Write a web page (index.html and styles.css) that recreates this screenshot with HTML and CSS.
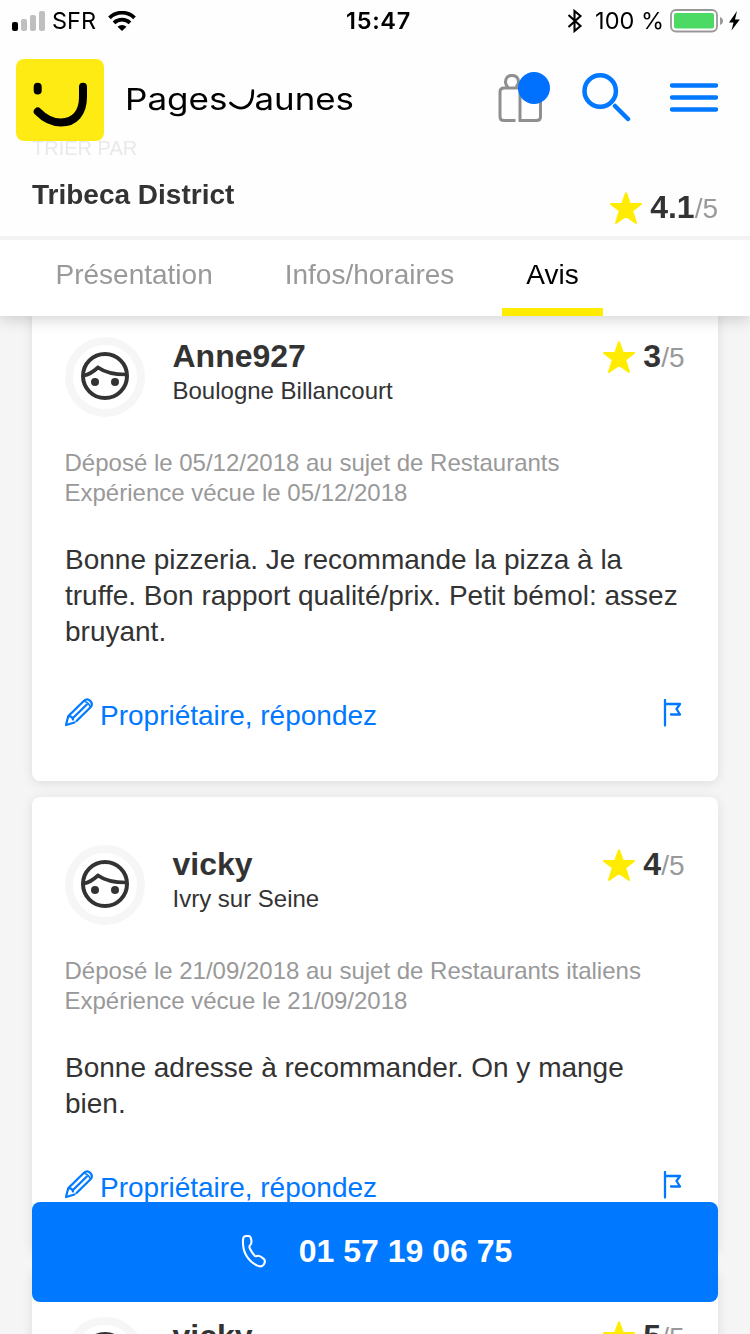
FILE: index.html
```html
<!DOCTYPE html>
<html lang="fr">
<head>
<meta charset="utf-8">
<title>Tribeca District - Avis</title>
<link rel="stylesheet" href="styles.css">
</head>
<body>
<svg class="sprite" aria-hidden="true">
  <symbol id="star" viewBox="0 0 32 32"><path d="M16 1.200 19.900 12H31L22.200 18.800 26 31 16 24 6 31 9.800 18.800 1 12H12.100Z" fill="#ffec00" stroke="#ffec00" stroke-width="2" stroke-linejoin="round"/></symbol>
  <symbol id="face" viewBox="0 0 48 48"><circle cx="24" cy="24" r="22" fill="none" stroke="#333" stroke-width="4"/><path d="M3 23.500C8 22.800 12.500 19.500 17 15.500C24 20.500 32 22.500 45 22.500" fill="none" stroke="#333" stroke-width="3.700"/><circle cx="14" cy="30" r="4" fill="#333"/><circle cx="34" cy="30" r="4" fill="#333"/></symbol>
  <symbol id="pen" viewBox="0 0 28 28"><path d="M9.500 24.500 1 27 3.200 18.300 19 2.800C21 .9 23.300 1 25.200 2.900S27.300 7.200 25.500 9.200L11.500 23M3.200 18.300C5.500 18 7.500 19.500 8 21.500M8 20 21.800 6.500" fill="none" stroke="#0078ff" stroke-width="2.200" stroke-linejoin="round" stroke-linecap="round"/><path d="M19.500 3.500Q24 4.500 24.800 8.500" fill="none" stroke="#0078ff" stroke-width="1.500"/></symbol>
  <symbol id="flag" viewBox="0 0 20 28"><path d="M2 1V26.500M2 5H17L13.500 10 17 15.500H8" fill="none" stroke="#0078ff" stroke-width="2.300" stroke-linecap="round" stroke-linejoin="round"/></symbol>
</svg>

<header class="top">
  <div class="status">
    <div class="status-left">
      <svg width="33" height="20" viewBox="0 0 33 20"><rect y="11" width="6" height="9" rx="2"/><g fill="#bfbfbf"><rect x="9" y="8" width="6" height="12" rx="2"/><rect x="18" y="4" width="6" height="16" rx="2"/><rect x="27" width="6" height="20" rx="2"/></g></svg>
      <span class="carrier">SFR</span>
      <svg width="28" height="20" viewBox="0 0 28 20"><path d="M1.500 6.800A17.800 17.800 0 0 1 26.500 6.800M6 11.800A11.500 11.500 0 0 1 22 11.800" fill="none" stroke="#000" stroke-width="3.800"/><path d="M9.500 15.800A6.500 6.500 0 0 1 18.500 15.800L14 20Z"/></svg>
    </div>
    <span class="clock">15:47</span>
    <div class="status-right">
      <svg width="16" height="24" viewBox="0 0 16 24"><path d="M1.500 6 13.500 17 7.500 22V2L13.500 7 1.500 18" fill="none" stroke="#000" stroke-width="2.100"/></svg>
      <span class="percent">100 %</span>
      <svg width="70" height="24" viewBox="0 0 70 24"><rect x="1" y="1" width="46" height="21.500" rx="5" fill="none" stroke="#999" stroke-width="1.800"/><rect x="4" y="4" width="40" height="15.500" rx="2" fill="#4cd964"/><path d="M50 8Q53 9.200 53 12T50 16Z" fill="#999"/><path d="M67 2 59 13.500H63.500L61.500 21.500 69.800 10.500H65Z"/></svg>
    </div>
  </div>

  <div class="brand-row">
    <span class="sort-label">TRIER PAR</span>
    <svg class="logo" width="88" height="82" viewBox="0 0 88 82"><rect width="88" height="82" rx="8" fill="#ffeb14"/><path d="M21.700 27.800V31.500M67 27.800V38C67 54 58.500 63.500 45 63.500C35 63.500 28 59 21.700 52.500" fill="none" stroke="#000" stroke-width="8" stroke-linecap="round"/></svg>
    <svg class="wordmark" width="230" height="40" viewBox="0 0 230 40"><text x="0" y="31.500" textLength="102.500" lengthAdjust="spacingAndGlyphs">Pages</text><path d="M105.500 25C112 32.500 127.800 34 127.800 12.500" fill="none" stroke="#000" stroke-width="2.700" stroke-linecap="round"/><text x="129.500" y="31.500" textLength="99.500" lengthAdjust="spacingAndGlyphs">aunes</text></svg>
    <div class="tools">
      <svg width="54" height="52" viewBox="0 0 54 52"><g fill="none" stroke="#8f8f8f" stroke-width="3"><path d="M17.500 49.500H6Q2 49.500 2 45.500V21Q2 17 6 17H38.500Q42.500 17 42.500 21V45.500Q42.500 49.500 38.500 49.500H22V16"/><path d="M10 16.500C5.500 11.500 7.500 4.500 14 4.500S22.500 11.500 18 16"/></g><circle cx="36" cy="17" r="16" fill="#0070ff"/></svg>
      <svg width="50" height="50" viewBox="0 0 50 50"><circle cx="18.200" cy="19" r="15.700" fill="none" stroke="#0078ff" stroke-width="4.500"/><path d="M33 34 46 47" stroke="#0078ff" stroke-width="4.500" stroke-linecap="round"/></svg>
      <svg width="48" height="30" viewBox="0 0 48 30"><path d="M2 3.500H46M2 15.500H46M2 27.500H46" stroke="#0078ff" stroke-width="4.300" stroke-linecap="round"/></svg>
    </div>
  </div>

  <div class="place">
    <h1 class="place-name">Tribeca District</h1>
    <div class="rating place-rating"><svg class="star"><use href="#star"/></svg><b>4.1</b><span>/5</span></div>
  </div>
  <nav class="tabs">
    <a class="tab">Présentation</a>
    <a class="tab">Infos/horaires</a>
    <a class="tab active">Avis</a>
  </nav>
</header>

<main class="reviews">
  <article class="card">
    <div class="card-head">
      <div class="avatar"><svg><use href="#face"/></svg></div>
      <div class="author"><h2>Anne927</h2><p>Boulogne Billancourt</p></div>
      <div class="rating"><svg class="star"><use href="#star"/></svg><b>3</b><span>/5</span></div>
    </div>
    <p class="meta">Déposé le 05/12/2018 au sujet de Restaurants<br>Expérience vécue le 05/12/2018</p>
    <p class="comment">Bonne pizzeria. Je recommande la pizza à la<br>truffe. Bon rapport qualité/prix. Petit bémol: assez<br>bruyant.</p>
    <div class="actions"><svg class="pen"><use href="#pen"/></svg><a>Propriétaire, répondez</a><svg class="flag"><use href="#flag"/></svg></div>
  </article>

  <article class="card">
    <div class="card-head">
      <div class="avatar"><svg><use href="#face"/></svg></div>
      <div class="author"><h2>vicky</h2><p>Ivry sur Seine</p></div>
      <div class="rating"><svg class="star"><use href="#star"/></svg><b>4</b><span>/5</span></div>
    </div>
    <p class="meta">Déposé le 21/09/2018 au sujet de Restaurants italiens<br>Expérience vécue le 21/09/2018</p>
    <p class="comment">Bonne adresse à recommander. On y mange<br>bien.</p>
    <div class="actions"><svg class="pen"><use href="#pen"/></svg><a>Propriétaire, répondez</a><svg class="flag"><use href="#flag"/></svg></div>
  </article>

  <article class="card">
    <div class="card-head">
      <div class="avatar"><svg><use href="#face"/></svg></div>
      <div class="author"><h2>vicky</h2></div>
      <div class="rating"><svg class="star"><use href="#star"/></svg><b>5</b><span>/5</span></div>
    </div>
  </article>
</main>

<a class="call">
  <svg width="26" height="34" viewBox="0 0 26 34"><path d="M16 31.500C6 26 1.500 17.500 2 6.500C2 2.500 3.500 2 5.500 2H7.500C9.500 2 10 3.500 10.300 6C10.700 8.500 10.900 10 8.900 11.500C8 12.300 8.500 14 9.500 15.800C10.600 17.800 12.500 20.500 13.700 21.800C14.800 22.800 15.500 22 17 21.800C18.800 21.600 21 23.500 22.500 24.700C24.600 26.300 24 28.500 22.800 30.500C21.500 32.600 20 32.900 17.500 32" fill="none" stroke="#fff" stroke-width="2.100" stroke-linecap="round" stroke-linejoin="round"/></svg>
  <span>01 57 19 06 75</span>
</a>
</body>
</html>
```
FILE: styles.css
```css
* { box-sizing: border-box; }
body {
  margin: 0;
  height: 1334px;
  overflow: hidden;
  background: #f5f5f5;
  color: #333;
  font-family: "Liberation Sans", Arial, sans-serif;
}
h1, h2, p { margin: 0; }
svg { display: block; flex: none; }
.sprite { position: absolute; width: 0; height: 0; }

.top {
  position: fixed;
  top: 0;
  left: 0;
  z-index: 2;
  width: 750px;
  height: 316px;
  display: flex;
  flex-direction: column;
  background: #fefefe;
  box-shadow: 0 2px 16px rgba(0, 0, 0, .2);
}

.status {
  height: 41px;
  display: grid;
  grid-template-columns: 1fr auto 1fr;
  align-items: center;
  padding: 0 10px 0 12px;
  color: #000;
  font: 23.500px/40px Inter, sans-serif;
}
.status-left, .status-right { display: flex; align-items: center; }
.status-right { justify-content: flex-end; }
.status-left { padding-bottom: 1px; }
.carrier { margin: 0 12px 0 7px; padding-top: 1px; }
.clock { font-weight: 600; letter-spacing: .7px; margin-left: 5px; }
.percent { margin: 0 6px 0 12px; }

.brand-row {
  position: relative;
  height: 118px;
  display: flex;
  align-items: flex-start;
  padding: 18px 32px 0 16px;
}
.logo { position: relative; }
.wordmark { margin: 19px 0 0 21px; overflow: visible; font: 30px Inter, sans-serif; }
.tools { display: flex; align-items: center; margin: 12px 0 0 auto; }
.tools svg:nth-child(1) { margin-right: 30px; }
.tools svg:nth-child(2) { margin-right: 38px; }
.sort-label {
  position: absolute;
  left: 32px;
  top: 95px;
  font-size: 20px;
  line-height: 24px;
  color: #e9e9e9;
}

.place {
  height: 81px;
  display: flex;
  justify-content: space-between;
  padding: 20px 32px 0;
  border-bottom: 4px solid #f3f3f3;
}
.place-name { font-size: 28px; line-height: 32px; }
.place-rating { margin-top: 9px; }

.rating { display: flex; align-items: baseline; line-height: 36px; height: 36px; padding-top: 1px; }
.rating b { font-size: 32px; margin-left: 8px; }
.rating span { font-size: 28px; color: #999; }
.star { width: 32px; height: 32px; align-self: center; margin-top: 2px; }
.card .rating { margin-right: .5px; }

.tabs { flex: 1; display: flex; gap: 24px; padding-left: 31.500px; background: #fff; }
.tab { padding: 18px 24px 0; font-size: 28px; line-height: 34px; color: #999; }
.tab.active { color: #000; border-bottom: 8px solid #ffec00; }

.reviews { padding: 289px 32px 0; display: flex; flex-direction: column; gap: 16px; }
.card {
  padding: 48px 33px 47px;
  border-radius: 8px;
  background: #fff;
  box-shadow: 0 2px 12px rgba(0, 0, 0, .1);
}
.card-head { display: flex; }
.avatar {
  width: 80px;
  height: 80px;
  border: 8px solid #f6f6f6;
  border-radius: 50%;
  display: flex;
  align-items: center;
  justify-content: center;
}
.avatar svg { width: 48px; height: 48px; margin-top: -2px; }
.author { flex: 1; margin-left: 27.500px; }
.author h2 { font-size: 32px; line-height: 38px; }
.author p { font-size: 24px; line-height: 32px; }
.meta { margin: 31px 0 0 -.5px; font-size: 24px; line-height: 30px; color: #999; }
.comment { margin-top: 34px; font-size: 28px; line-height: 36px; }
.actions { display: flex; margin-top: 48px; font-size: 28px; line-height: 36px; color: #0078ff; }
.pen { width: 28px; height: 28px; margin-right: 7px; }
.flag { width: 20px; height: 28px; margin: 1px 2px 0 auto; }

.call {
  position: fixed;
  left: 32px;
  top: 1202px;
  z-index: 1;
  width: 686px;
  height: 100px;
  display: flex;
  align-items: center;
  justify-content: center;
  gap: 32px;
  padding: 0 0 2px 3px;
  border-radius: 8px;
  background: #0078ff;
  color: #fff;
  font-size: 32px;
  font-weight: 700;
}
```
